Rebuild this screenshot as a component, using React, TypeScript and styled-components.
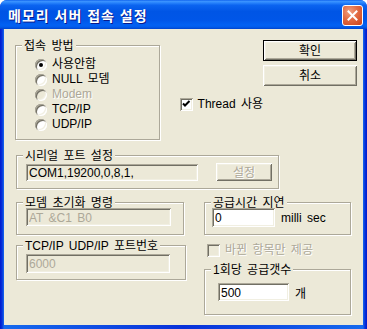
import React from 'react';
import styled, { createGlobalStyle } from 'styled-components';

const FONT = `"Liberation Sans", "Noto Sans CJK KR", sans-serif`;

const GlobalStyle = createGlobalStyle`
  html, body { margin: 0; padding: 0; background: #ffffff; }
  body { font-family: ${FONT}; font-size: 12px; color: #000; word-spacing: 2px; }
`;

const Window = styled.div`
  width: 367px;
  height: 329px;
  box-sizing: border-box;
  display: flex;
  flex-direction: column;
  background: linear-gradient(to right, #0019cf 0, #0831d9 2px, #166aee 4px, #0831d9 50%, #166aee calc(100% - 4px), #0831d9 calc(100% - 2px), #0019cf 100%);
  border-radius: 7px 7px 0 0;
  overflow: hidden;
`;

const TitleBar = styled.div`
  height: 29px;
  flex: none;
  display: flex;
  align-items: center;
  padding: 0 4px 0 8px;
  background: linear-gradient(180deg, #0a5ceb 0%, #3d95ff 4%, #2b86fc 9%, #0b64f0 18%, #0055e5 40%, #0056e8 70%, #0261f3 86%, #015cec 93%, #0043cc 100%);
`;

const Title = styled.span`
  flex: 1;
  color: #ffffff;
  font-family: ${FONT};
  font-size: 14px;
  font-weight: bold;
  letter-spacing: 1px;
  word-spacing: 0;
  line-height: 16px;
  padding-top: 2px;
  text-shadow: 1px 1px 0 #0a1a8c;
`;

const CloseButton = styled.div`
  width: 21px;
  height: 21px;
  box-sizing: border-box;
  margin-top: 2px;
  border: 1px solid #ffffff;
  border-radius: 3px;
  background: radial-gradient(circle at 35% 30%, #f0a082 0%, #e26b43 45%, #cc4119 100%);
  display: flex;
  align-items: center;
  justify-content: center;
`;

const Client = styled.div`
  flex: 1;
  margin: 0 4px 4px;
  background: #ece9d8;
  display: flex;
  flex-direction: column;
`;

const TopRow = styled.div`
  display: flex;
  align-items: flex-start;
  padding-left: 11px;
`;

const Row = styled.div<{ $top: number }>`
  display: flex;
  align-items: flex-start;
  padding-left: 12px;
  margin-top: ${p => p.$top}px;
`;

const Column = styled.div<{ $left?: number }>`
  display: flex;
  flex-direction: column;
  margin-left: ${p => p.$left || 0}px;
`;

const GroupBox = styled.div<{ $w: number; $h: number; $top?: number }>`
  width: ${p => p.$w}px;
  height: ${p => p.$h}px;
  margin-top: ${p => p.$top || 0}px;
  box-sizing: border-box;
  border: 1px solid #aca899;
  box-shadow: inset 1px 1px 0 #ffffff, 1px 1px 0 #ffffff;
  display: flex;
  flex-direction: column;
  align-items: flex-start;
`;

const GroupLabel = styled.span`
  margin: -6px 0 0 6px;
  padding: 0 2px;
  height: 12px;
  line-height: 12px;
  background: #ece9d8;
  white-space: nowrap;
`;

const GroupBody = styled.div<{ $top: number; $left: number }>`
  display: flex;
  align-items: center;
  margin-top: ${p => p.$top}px;
  padding-left: ${p => p.$left}px;
`;

const RadioList = styled.div`
  display: flex;
  flex-direction: column;
  margin-top: 5px;
  padding-left: 19px;
`;

const OptionRow = styled.label<{ $disabled?: boolean }>`
  display: flex;
  align-items: center;
  height: 15px;
  line-height: 15px;
  gap: 5px;
  color: ${p => (p.$disabled ? '#aca899' : '#000')};
  text-shadow: ${p => (p.$disabled ? '1px 1px 0 #ffffff' : 'none')};
  white-space: nowrap;
`;

const RadioCircle = styled.span<{ $checked?: boolean; $disabled?: boolean }>`
  width: 12px;
  height: 12px;
  flex: none;
  border-radius: 50%;
  background: ${p => (p.$disabled ? '#ece9d8' : '#ffffff')};
  box-shadow: inset 1px 1px 0 #aca899, inset -1px -1px 0 #ffffff, inset 2px 2px 0 #716f64, inset -2px -2px 0 #f1efe2;
  display: flex;
  align-items: center;
  justify-content: center;
  &::after {
    content: '';
    width: 4px;
    height: 4px;
    border-radius: 50%;
    background: #000;
    display: ${p => (p.$checked ? 'block' : 'none')};
  }
`;

const CheckRow = styled.label<{ $disabled?: boolean; $top: number; $left: number }>`
  display: flex;
  align-items: center;
  gap: 5px;
  height: 13px;
  line-height: 13px;
  margin-top: ${p => p.$top}px;
  margin-left: ${p => p.$left}px;
  color: ${p => (p.$disabled ? '#aca899' : '#000')};
  text-shadow: ${p => (p.$disabled ? '1px 1px 0 #ffffff' : 'none')};
  white-space: nowrap;
`;

const CheckBox = styled.span<{ $disabled?: boolean }>`
  width: 13px;
  height: 13px;
  flex: none;
  box-sizing: border-box;
  background: ${p => (p.$disabled ? '#ece9d8' : '#ffffff')};
  box-shadow: inset 1px 1px 0 #aca899, inset -1px -1px 0 #ffffff, inset 2px 2px 0 #716f64, inset -2px -2px 0 #f1efe2;
  display: flex;
  align-items: center;
  justify-content: center;
`;

const ButtonColumn = styled.div`
  display: flex;
  flex-direction: column;
  gap: 4px;
  margin: 11px 6px 0 auto;
`;

const Button = styled.div<{ $default?: boolean; $disabled?: boolean; $w: number; $h: number }>`
  width: ${p => p.$w}px;
  height: ${p => p.$h}px;
  box-sizing: border-box;
  display: flex;
  align-items: center;
  justify-content: center;
  background: #ece9d8;
  border: ${p => (p.$default ? '1px solid #000' : 'none')};
  box-shadow: inset 1px 1px 0 #ffffff, inset -1px -1px 0 #716f64, inset 2px 2px 0 #f1efe2, inset -2px -2px 0 #aca899;
  color: ${p => (p.$disabled ? '#aca899' : '#000')};
  text-shadow: ${p => (p.$disabled ? '1px 1px 0 #ffffff' : 'none')};
  line-height: 14px;
  padding-top: 1px;
`;

const TextField = styled.input<{ $w: number; $h: number; $white?: boolean; $muted?: boolean }>`
  width: ${p => p.$w}px;
  height: ${p => p.$h}px;
  box-sizing: border-box;
  margin: 0;
  border: none;
  outline: none;
  padding: 1px 0 0 3px;
  font-family: ${FONT};
  font-size: 12px;
  word-spacing: 2px;
  background: ${p => (p.$white ? '#ffffff' : '#ece9d8')};
  color: ${p => (p.$muted ? '#aca899' : '#000')};
  box-shadow: inset 1px 1px 0 #aca899, inset -1px -1px 0 #ffffff, inset 2px 2px 0 #716f64, inset -2px -2px 0 #f1efe2;
`;

const Unit = styled.span<{ $gap: number }>`
  margin-left: ${p => p.$gap}px;
  white-space: nowrap;
`;

const methods = [
  { label: '사용안함', checked: true },
  { label: 'NULL 모뎀' },
  { label: 'Modem', disabled: true },
  { label: 'TCP/IP' },
  { label: 'UDP/IP' },
];

const CheckMark = () => (
  <svg width="9" height="9" viewBox="0 0 9 9">
    <path d="M1 3.5 L3 5.5 L7.5 1" fill="none" stroke="#000" strokeWidth="2" />
  </svg>
);

export default function App() {
  return (
    <>
      <GlobalStyle />
      <Window>
        <TitleBar>
          <Title>메모리 서버 접속 설정</Title>
          <CloseButton>
            <svg width="11" height="11" viewBox="0 0 11 11">
              <path d="M1.5 1.5 L9.5 9.5 M9.5 1.5 L1.5 9.5" stroke="#ffffff" strokeWidth="2" strokeLinecap="square" />
            </svg>
          </CloseButton>
        </TitleBar>
        <Client>
          <TopRow>
            <GroupBox $w={148} $h={95} $top={16}>
              <GroupLabel>접속 방법</GroupLabel>
              <RadioList>
                {methods.map(m => (
                  <OptionRow key={m.label} $disabled={m.disabled}>
                    <RadioCircle $checked={m.checked} $disabled={m.disabled} />
                    {m.label}
                  </OptionRow>
                ))}
              </RadioList>
            </GroupBox>
            <CheckRow $top={69} $left={20}>
              <CheckBox>
                <CheckMark />
              </CheckBox>
              Thread 사용
            </CheckRow>
            <ButtonColumn>
              <Button $default $w={94} $h={21}>확인</Button>
              <Button $w={94} $h={21}>취소</Button>
            </ButtonColumn>
          </TopRow>

          <Row $top={15}>
            <GroupBox $w={263} $h={34}>
              <GroupLabel>시리얼 포트 설정</GroupLabel>
              <GroupBody $top={1} $left={9}>
                <TextField $w={172} $h={17} readOnly defaultValue="COM1,19200,0,8,1," />
                <Button $disabled $w={56} $h={18} style={{ marginLeft: 18 }}>설정</Button>
              </GroupBody>
            </GroupBox>
          </Row>

          <Row $top={13}>
            <Column>
              <GroupBox $w={168} $h={33}>
                <GroupLabel>모뎀 초기화 명령</GroupLabel>
                <GroupBody $top={-1} $left={9}>
                  <TextField $w={145} $h={18} $muted disabled defaultValue="AT &C1 B0" />
                </GroupBody>
              </GroupBox>
              <GroupBox $w={170} $h={35} $top={10}>
                <GroupLabel>TCP/IP UDP/IP 포트번호</GroupLabel>
                <GroupBody $top={2} $left={9}>
                  <TextField $w={144} $h={19} $muted disabled defaultValue="6000" />
                </GroupBody>
              </GroupBox>
            </Column>
            <Column $left={18}>
              <GroupBox $w={147} $h={33}>
                <GroupLabel>공급시간 지연</GroupLabel>
                <GroupBody $top={-1} $left={7}>
                  <TextField $w={63} $h={19} $white defaultValue="0" />
                  <Unit $gap={6}>milli sec</Unit>
                </GroupBody>
              </GroupBox>
              <CheckRow $disabled $top={9} $left={3}>
                <CheckBox $disabled />
                바뀐 항목만 제공
              </CheckRow>
              <GroupBox $w={147} $h={46} $top={12}>
                <GroupLabel>1회당 공급갯수</GroupLabel>
                <GroupBody $top={7} $left={13}>
                  <TextField $w={71} $h={18} $white defaultValue="500" />
                  <Unit $gap={6}>개</Unit>
                </GroupBody>
              </GroupBox>
            </Column>
          </Row>
        </Client>
      </Window>
    </>
  );
}
